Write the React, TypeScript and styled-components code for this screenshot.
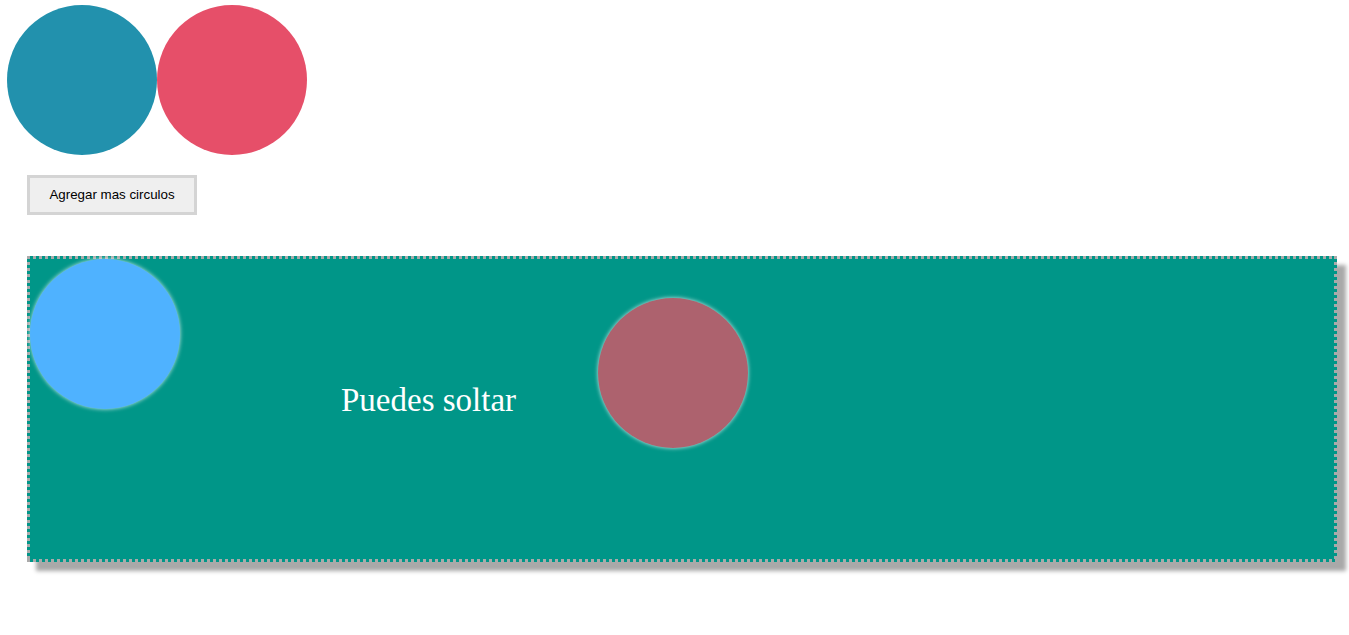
import React from "react";
import styled, { createGlobalStyle } from "styled-components";

const Global = createGlobalStyle`
  html, body { margin: 0; padding: 0; background: #fff; }
  body { font-family: "Liberation Serif", "Times New Roman", serif; }
`;

const Page = styled.div`
  padding: 5px 12px 40px 7px;
`;

const Palette = styled.div`
  display: flex;
`;

const Circle = styled.div<{ $color: string }>`
  width: 150px;
  height: 150px;
  border-radius: 50%;
  background: ${(p) => p.$color};
`;

const AddButton = styled.button`
  display: block;
  margin: 20px 0 0 20px;
  width: 170px;
  height: 40px;
  border: 3px solid #d4d4d4;
  background: #efefef;
  font-family: "Liberation Sans", Arial, sans-serif;
  font-size: 13.33px;
  color: #000;
  padding: 0 0 1px;
`;

const dotsH = "repeating-linear-gradient(90deg, #aaa 0 3px, transparent 3px 6px)";
const dotsV = "repeating-linear-gradient(180deg, #aaa 0 3px, transparent 3px 6px)";

const DropZone = styled.div`
  position: relative;
  margin: 41px 0 0 20px;
  width: 1310px;
  height: 306px;
  box-sizing: border-box;
  padding: 3px 3px 21px 314px;
  background:
    ${dotsH} left top / 100% 3px no-repeat,
    ${dotsH} left bottom / 100% 3px no-repeat,
    ${dotsV} left top / 3px 100% no-repeat,
    ${dotsV} right top / 3px 100% no-repeat,
    #009688;
  box-shadow: 9px 9px 4px #a9a9a9;
  display: flex;
  align-items: center;
`;

const DropText = styled.span`
  color: #fff;
  font-size: 33px;
`;

const Dropped = styled.div<{ $color: string }>`
  position: absolute;
  width: 150px;
  height: 150px;
  border-radius: 50%;
  background: ${(p) => p.$color};
  box-shadow: 0 0 4px rgba(255, 255, 255, 0.8);
`;

export default function App() {
  return (
    <>
      <Global />
      <Page>
        <Palette>
          <Circle $color="#2291ad" />
          <Circle $color="#e64f69" />
        </Palette>
        <AddButton>Agregar mas circulos</AddButton>
        <DropZone>
          <Dropped $color="#4fb2ff" style={{ left: 3, top: 3 }} />
          <DropText>Puedes soltar</DropText>
          <Dropped $color="#ad626e" style={{ left: 571, top: 42 }} />
        </DropZone>
      </Page>
    </>
  );
}
